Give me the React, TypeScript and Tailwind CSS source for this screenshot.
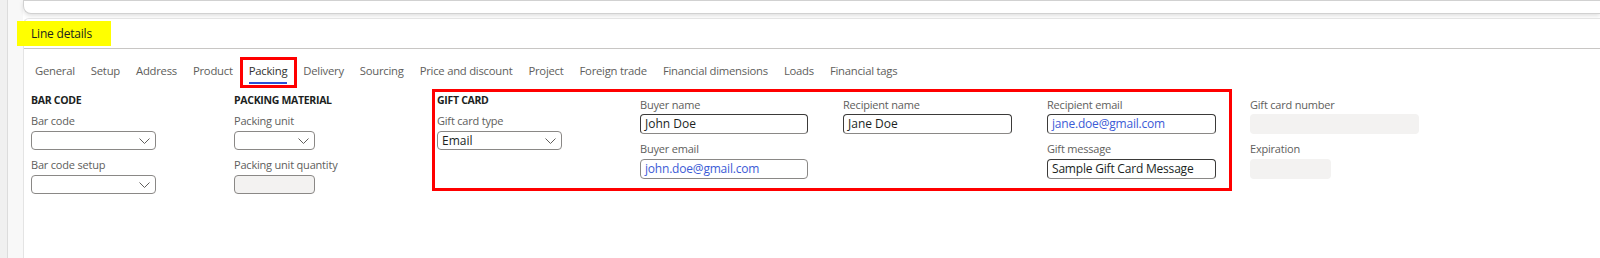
import React from "react";

const FONT = "font-['Open_Sans','Noto_Sans',sans-serif]";

function Chevron() {
  return (
    <svg width="11" height="6" viewBox="0 0 11 6" fill="none">
      <path d="M0.5 0.5 L5.5 5.5 L10.5 0.5" stroke="#605e5c" strokeWidth="1" />
    </svg>
  );
}

function Label({ children }: { children: React.ReactNode }) {
  return (
    <div className="h-[16px] leading-[16px] text-[11px] tracking-[-0.2px] text-[#605e5c] whitespace-nowrap">
      {children}
    </div>
  );
}

function Header({ children }: { children: React.ReactNode }) {
  return (
    <div className="h-[16px] leading-[16px] text-[10.5px] font-bold tracking-[-0.3px] text-[#201f1e] whitespace-nowrap">
      {children}
    </div>
  );
}

const tabs = [
  "General",
  "Setup",
  "Address",
  "Product",
  "Packing",
  "Delivery",
  "Sourcing",
  "Price and discount",
  "Project",
  "Foreign trade",
  "Financial dimensions",
  "Loads",
  "Financial tags",
];

export default function App() {
  return (
    <div className={`flex h-[258px] w-[1600px] overflow-hidden bg-white ${FONT}`}>
      <div className="w-[8px] shrink-0 border-r border-[#dcdcdc] bg-[#f0f0f0]" />
      <div className="w-[15px] shrink-0 bg-[#f8f8f8]" />
      <div className="flex min-w-0 flex-1 flex-col">
        <div className="h-[14px] shrink-0 rounded-bl-[8px] border-t border-b border-l border-[#d1d1d1] bg-white shadow-[0_2px_4px_rgba(0,0,0,0.12)]" />
        <div className="h-[4px] shrink-0" />
        <div className="flex-1 rounded-tl-[6px] border-t border-l border-[#e4e4e4] bg-white">
          {/* Header */}
          <div className="flex h-[30px] items-center border-b border-[#c8c6c4]">
            <span className="-ml-[7px] flex h-[25px] items-center bg-[#ffff00] pl-[14px] pr-[19px] text-[12px] tracking-[-0.2px] text-[#201f1e]">
              Line details
            </span>
          </div>

          {/* Tabs */}
          <div className="flex gap-[10px] pl-[8px] pt-[14px]">
            {tabs.map((t) => {
              const active = t === "Packing";
              return (
                <div key={t} className="relative flex flex-col px-[3px]">
                  <span
                    className={`h-[16px] whitespace-nowrap text-[11.3px] leading-[16px] tracking-[-0.25px] ${
                      active ? "text-[#323130]" : "text-[#605e5c]"
                    }`}
                  >
                    {t}
                  </span>
                  <div className={`mt-[3px] h-[2px] ${active ? "bg-[#2a4fd6]" : "bg-transparent"}`} />
                  {active && (
                    <div className="absolute -bottom-[4px] -left-[6px] -right-[7px] -top-[6px] border-[3px] border-[#ff0000]" />
                  )}
                </div>
              );
            })}
          </div>

          {/* Content */}
          <div className="mt-[5px] flex items-start pl-[7px]">
            {/* Bar code */}
            <div className="w-[203px] shrink-0 pt-[3px]">
              <Header>BAR CODE</Header>
              <div className="mt-[5px]">
                <Label>Bar code</Label>
                <div className="mt-[2px] flex h-[19px] w-[125px] items-center justify-end rounded-[4px] border border-[#8a8886] pr-[5px]">
                  <Chevron />
                </div>
              </div>
              <div className="mt-[7px]">
                <Label>Bar code setup</Label>
                <div className="mt-[2px] flex h-[19px] w-[125px] items-center justify-end rounded-[4px] border border-[#8a8886] pr-[5px]">
                  <Chevron />
                </div>
              </div>
            </div>

            {/* Packing material */}
            <div className="w-[203px] shrink-0 pt-[3px]">
              <Header>PACKING MATERIAL</Header>
              <div className="mt-[5px]">
                <Label>Packing unit</Label>
                <div className="mt-[2px] flex h-[19px] w-[81px] items-center justify-end rounded-[4px] border border-[#8a8886] pr-[5px]">
                  <Chevron />
                </div>
              </div>
              <div className="mt-[7px]">
                <Label>Packing unit quantity</Label>
                <div className="mt-[2px] h-[19px] w-[81px] rounded-[4px] border border-[#8a8886] bg-[#f3f2f1]" />
              </div>
            </div>

            {/* Gift card (annotated) */}
            <div className="-ml-[5px] flex h-[102px] shrink-0 border-[3px] border-[#ff0000] pl-[2px]">
              <div className="w-[203px] shrink-0">
                <Header>GIFT CARD</Header>
                <div className="mt-[5px]">
                  <Label>Gift card type</Label>
                  <div className="mt-[2px] flex h-[19px] w-[125px] items-center justify-between rounded-[4px] border border-[#8a8886] pl-[4px] pr-[5px]">
                    <span className="text-[12px] leading-[16px] text-[#201f1e]">Email</span>
                    <Chevron />
                  </div>
                </div>
              </div>

              <div className="w-[203px] shrink-0 pt-[5px]">
                <Label>Buyer name</Label>
                <div className="mt-[1px] flex h-[20px] w-[168px] items-center rounded-[4px] border border-[#3b3a39] border-b-[#8a8886] px-[4px] text-[12px] text-[#201f1e]">
                  John Doe
                </div>
                <div className="mt-[7px]">
                  <Label>Buyer email</Label>
                  <div className="mt-[2px] flex h-[20px] w-[168px] items-center rounded-[4px] border border-[#8a8886] px-[4px] text-[12px] tracking-[-0.2px] text-[#3c5bd6]">
                    john.doe@gmail.com
                  </div>
                </div>
              </div>

              <div className="w-[204px] shrink-0 pt-[5px]">
                <Label>Recipient name</Label>
                <div className="mt-[1px] flex h-[20px] w-[169px] items-center rounded-[4px] border border-[#3b3a39] border-b-[#8a8886] px-[4px] text-[12px] text-[#201f1e]">
                  Jane Doe
                </div>
              </div>

              <div className="w-[182px] shrink-0 pt-[5px]">
                <Label>Recipient email</Label>
                <div className="mt-[1px] flex h-[20px] w-[169px] items-center rounded-[4px] border border-[#3b3a39] border-b-[#8a8886] px-[4px] text-[12px] tracking-[-0.2px] text-[#3c5bd6]">
                  jane.doe@gmail.com
                </div>
                <div className="mt-[7px]">
                  <Label>Gift message</Label>
                  <div className="mt-[2px] flex h-[20px] w-[169px] items-center rounded-[4px] border border-[#3b3a39] border-b-[#8a8886] px-[4px] text-[12px] tracking-[-0.2px] text-[#201f1e] whitespace-nowrap">
                    Sample Gift Card Message
                  </div>
                </div>
              </div>
            </div>

            {/* Gift card number */}
            <div className="ml-[18px] w-[203px] shrink-0 pt-[8px]">
              <Label>Gift card number</Label>
              <div className="mt-[1px] h-[20px] w-[169px] rounded-[4px] bg-[#f3f2f1]" />
              <div className="mt-[7px]">
                <Label>Expiration</Label>
                <div className="mt-[2px] h-[20px] w-[81px] rounded-[4px] bg-[#f3f2f1]" />
              </div>
            </div>
          </div>
        </div>
      </div>
    </div>
  );
}
